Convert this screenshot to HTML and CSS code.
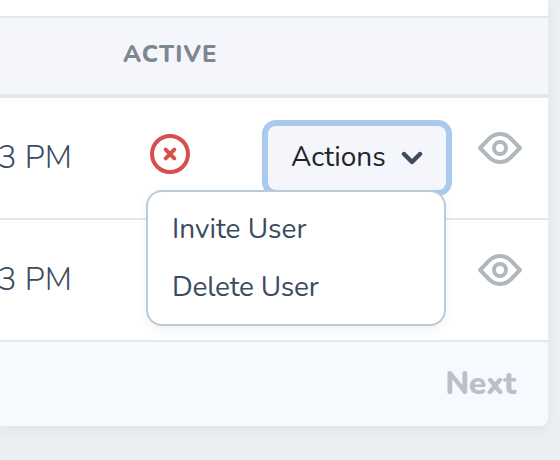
FILE: index.html
```html
<!DOCTYPE html>
<html lang="en">
<head>
<meta charset="utf-8">
<title>Users</title>
<link rel="stylesheet" href="styles.css">
</head>
<body>
<main class="card">
  <div class="toolbar"></div>
  <div class="row header"><span></span><span class="heading">ACTIVE</span></div>
  <div class="row">
    <span class="time">3 PM</span>
    <svg class="inactive" viewBox="0 0 40 40"><circle cx="20" cy="20" r="18"/><path d="M15.700 15.700l8.600 8.600m0-8.600l-8.600 8.600"/></svg>
    <div class="actions">
      <button class="trigger"><span class="label">Actions</span><svg class="chevron" viewBox="0 0 22 14"><path d="M3 3l8 8 8-8"/></svg></button>
      <div class="menu"><a class="item">Invite User</a><a class="item delete">Delete User</a></div>
    </div>
    <svg class="eye" viewBox="0 0 44 32"><path d="M2.100 16L11.600 6.200Q16 2 22 2t10.400 4.200L41.900 16l-9.500 9.800Q28 30 22 30t-10.400-4.200z"/><circle cx="22" cy="16" r="6"/></svg>
  </div>
  <div class="row">
    <span class="time">3 PM</span>
    <span></span><span></span>
    <svg class="eye" viewBox="0 0 44 32"><path d="M2.100 16L11.600 6.200Q16 2 22 2t10.400 4.200L41.900 16l-9.500 9.800Q28 30 22 30t-10.400-4.200z"/><circle cx="22" cy="16" r="6"/></svg>
  </div>
  <footer class="footer"><span class="next">Next</span></footer>
</main>
</body>
</html>
```
FILE: styles.css
```css
* { box-sizing: border-box; }
body {
  margin: 0;
  height: 460px;
  overflow: hidden;
  background: #ebeff2;
  color: #3c4b5f;
  font-family: Nunito, Lato, sans-serif;
}
.card {
  width: 548px;
  height: 426px;
  background: #fff;
  border-bottom-right-radius: 8px;
  box-shadow: 0 4px 12px rgba(0, 0, 0, .05);
}
.toolbar { height: 18px; border-bottom: 2px solid #e3e7eb; }
.row {
  display: grid;
  grid-template-columns: 122px 146px 178px 102px;
  height: 122px;
  border-bottom: 2px solid #e3e7eb;
}
.header {
  height: 80px;
  background: #f4f6fb;
  border-bottom-width: 4px;
}
.heading {
  margin: 21px 0 0 1px;
  color: #7d878f;
  font-size: 24px;
  font-weight: 800;
  line-height: 30px;
  letter-spacing: 1.1px;
}
.time {
  margin: 40px 0 0 -2.5px;
  font-size: 32px;
  font-weight: 300;
  line-height: 40px;
  white-space: nowrap;
}
.inactive {
  width: 40px;
  height: 40px;
  margin: 36px 0 0 28px;
  fill: none;
  stroke: #d5514b;
  stroke-width: 4;
  stroke-linecap: round;
}
.actions { position: relative; padding-top: 28px; }
.trigger {
  display: flex;
  align-items: center;
  width: 178px;
  height: 64px;
  padding: 0 0 0 23px;
  border: 0;
  border-radius: 8px;
  background: #f4f6fb;
  box-shadow: 0 0 0 6px #a9caec;
  color: #212529;
  font: 400 28px/34px Nunito, Lato, sans-serif;
}
.label { width: 110px; padding-bottom: 2px; text-align: left; }
.chevron {
  width: 22px;
  height: 14px;
  fill: none;
  stroke: #3c4b5f;
  stroke-width: 4.4;
  stroke-linecap: round;
  stroke-linejoin: round;
}
.menu {
  position: absolute;
  z-index: 1;
  top: 92px;
  right: 0;
  width: 300px;
  height: 136px;
  padding: 8px 24px;
  border: 2px solid #bacad6;
  border-radius: 16px;
  background: #fff;
  box-shadow: 0 4px 12px rgba(0, 0, 0, .05);
}
.item {
  display: block;
  font-size: 28px;
  line-height: 58px;
}
.delete { letter-spacing: -.25px; }
.eye {
  width: 44px;
  height: 32px;
  margin: 34px 0 0 32px;
  fill: none;
  stroke: #b1b8bd;
  stroke-width: 4;
  stroke-linejoin: round;
}
.footer {
  display: flex;
  justify-content: flex-end;
  height: 84px;
  padding: 22px 32px 0 0;
  border-bottom-right-radius: 8px;
  background: #f6faff;
}
.next {
  color: #bac0c5;
  font-size: 32px;
  font-weight: 800;
  line-height: 40px;
  letter-spacing: -.4px;
}
```
